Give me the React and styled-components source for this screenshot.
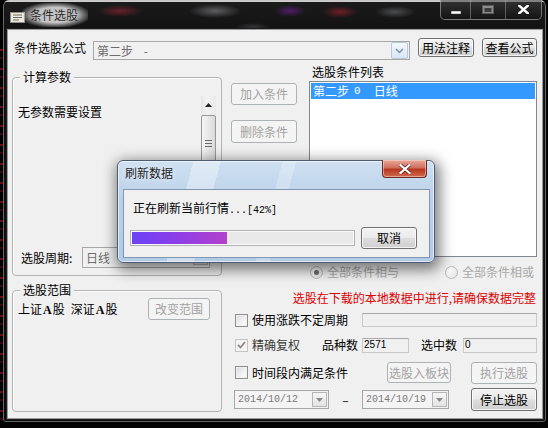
import styled, { createGlobalStyle } from "styled-components";

const GlobalStyle = createGlobalStyle`
  * { box-sizing: border-box; }
  html, body { margin: 0; padding: 0; background: #030303; }
  body {
    font-family: "Noto Sans CJK SC", "Liberation Sans", sans-serif;
    font-size: 12px;
    line-height: 16px;
    color: #000;
  }
`;

const Page = styled.div`
  position: relative;
  width: 548px;
  height: 428px;
  padding-left: 3px;
  overflow: hidden;
  background:
    repeating-linear-gradient(180deg, #000 0 9px, #6b1010 9px 11px, #000 11px 17px, #3a0808 17px 19px) 0 40px / 3px 380px no-repeat,
    #030303;
`;

const Window = styled.div`
  width: 543px;
  height: 422px;
  display: flex;
  flex-direction: column;
  border-radius: 6px 6px 3px 3px;
  box-shadow: inset 0 0 0 1px rgba(190, 190, 190, 0.5);
  background:
    radial-gradient(ellipse 22px 6px at 117px 11px, rgba(170, 40, 60, 0.55), transparent),
    radial-gradient(ellipse 26px 7px at 212px 11px, rgba(200, 200, 210, 0.4), transparent),
    radial-gradient(ellipse 16px 6px at 287px 11px, rgba(120, 30, 160, 0.6), transparent),
    radial-gradient(ellipse 18px 6px at 337px 12px, rgba(200, 40, 50, 0.5), transparent),
    radial-gradient(ellipse 20px 6px at 392px 12px, rgba(170, 175, 185, 0.35), transparent),
    radial-gradient(ellipse 18px 4px at 250px 27px, rgba(120, 120, 130, 0.35), transparent),
    linear-gradient(180deg, #cfcfcf 0 2px, #1b1b1b 2px, #121212 30px, #0b0b0b);
`;

const TitleBar = styled.div`
  display: flex;
  align-items: flex-start;
  height: 30px;
  flex: none;
`;

const AppIcon = styled.svg`
  margin: 12px 0 0 7px;
  flex: none;
`;

const WindowTitle = styled.div`
  margin: 3px 0 0 -3px;
  padding: 4px 10px 4px 8px;
  color: #2a2a2a;
  background: radial-gradient(ellipse at center, rgba(215, 215, 215, 0.9) 45%, rgba(215, 215, 215, 0) 78%);
`;

const CaptionGroup = styled.div`
  display: flex;
  height: 20px;
  margin: 0 4px 0 auto;
  border: 1px solid rgba(215, 215, 215, 0.45);
  border-top: 0;
  border-radius: 0 0 5px 5px;
  overflow: hidden;
  background: linear-gradient(rgba(70, 70, 70, 0.55), rgba(20, 20, 20, 0.6));
`;

const CaptionButton = styled.div`
  width: ${(p) => p.$w}px;
  display: flex;
  align-items: center;
  justify-content: center;
  & + & { border-left: 1px solid rgba(215, 215, 215, 0.35); }
`;

const Client = styled.div`
  margin-left: 5px;
  width: 534px;
  height: 388px;
  flex: none;
  background: #f0f0f0;
  box-shadow: 0 0 0 1px #9a9a9a, 0 0 0 2px #1c1c1c;
`;

const FormulaRow = styled.div`
  display: flex;
  align-items: flex-start;
  height: 30px;
  padding: 8px 0 0 6px;
`;

const Label = styled.span`
  flex: none;
  width: ${(p) => (p.$w ? `${p.$w}px` : "auto")};
  margin-top: ${(p) => p.$mt || 0}px;
  margin-left: ${(p) => p.$ml || 0}px;
  white-space: nowrap;
`;

const Combo = styled.div`
  flex: none;
  display: flex;
  align-items: center;
  width: ${(p) => p.$w}px;
  height: ${(p) => p.$h}px;
  margin-top: ${(p) => p.$mt || 0}px;
  margin-left: ${(p) => p.$ml || 0}px;
  padding: 0 1px 0 3px;
  border: 1px solid #a7a7a7;
  background: ${(p) => (p.$light ? "#f4f4f4" : "#f0f0f0")};
  color: #6d6d6d;
`;

const ComboText = styled.span`
  flex: 1;
  white-space: pre;
  font-family: ${(p) => (p.$mono ? '"Liberation Mono", monospace' : "inherit")};
  font-size: ${(p) => (p.$mono ? "10px" : "12px")};
  color: ${(p) => (p.$mono ? "#7a7a7a" : "#6d6d6d")};
`;

const ComboArrow = styled.span`
  flex: none;
  display: flex;
  align-items: center;
  justify-content: center;
  width: ${(p) => p.$size}px;
  height: ${(p) => p.$size}px;
  border: 1px solid ${(p) => (p.$blue ? "#b6c9dd" : "#b5b5b5")};
  border-radius: ${(p) => (p.$blue ? "2px" : "0")};
  background: ${(p) =>
    p.$blue ? "linear-gradient(#f3f8fd, #d9e7f5)" : "linear-gradient(#f7f7f7, #e3e3e3)"};
`;

const Btn = styled.button`
  flex: none;
  width: ${(p) => p.$w}px;
  height: ${(p) => p.$h || 22}px;
  margin: ${(p) => p.$m || "0"};
  padding: 0;
  font: inherit;
  line-height: 14px;
  color: #000;
  border: 1px solid #707070;
  border-radius: 3px;
  background: linear-gradient(#f2f2f2 0%, #ebebeb 48%, #dddddd 52%, #cfcfcf 100%);
  box-shadow: inset 0 0 0 1px rgba(255, 255, 255, 0.75);
  &:disabled {
    color: #a3a3a3;
    border-color: #adb2b5;
    background: #f4f4f4;
    box-shadow: none;
  }
`;

const Main = styled.div`
  display: grid;
  grid-template-columns: 210px 306px;
  column-gap: 9px;
  align-items: start;
  padding-left: 4px;
`;

const Column = styled.div`
  display: flex;
  flex-direction: column;
`;

const GroupBox = styled.div`
  display: flex;
  flex-direction: column;
  height: ${(p) => p.$h}px;
  margin-top: ${(p) => p.$mt}px;
  border: 1px solid #b3b3b3;
  border-radius: 4px;
  box-shadow: inset 1px 1px 0 #fff;
`;

const GroupTitle = styled.div`
  align-self: flex-start;
  margin: -9px 0 0 7px;
  padding: 0 3px;
  background: #f0f0f0;
`;

const ParamArea = styled.div`
  display: flex;
  height: 144px;
  margin-top: 11px;
  padding: 8px 5px 0 5px;
`;

const ParamText = styled.div`
  flex: 1;
`;

const ScrollBar = styled.div`
  flex: none;
  display: flex;
  flex-direction: column;
  align-items: center;
  width: 15px;
  margin-top: -8px;
  background: linear-gradient(90deg, #e6e6e6, #f2f2f2 40%, #eaeaea);
`;

const ScrollArrow = styled.div`
  height: 17px;
  display: flex;
  align-items: center;
  justify-content: center;
`;

const ScrollThumb = styled.div`
  width: 15px;
  height: 56px;
  margin-top: 2px;
  display: flex;
  align-items: center;
  justify-content: center;
  border: 1px solid #979797;
  border-radius: 2px;
  background: linear-gradient(90deg, #f4f4f4, #e8e8e8 50%, #dadada);
`;

const PeriodRow = styled.div`
  display: flex;
  align-items: center;
  height: 21px;
  margin-top: 7px;
  padding-left: 8px;
`;

const RangeRow = styled.div`
  display: flex;
  align-items: center;
  height: 22px;
  padding-left: 5px;
`;

const Market = styled.span`
  margin-left: ${(p) => p.$ml || 0}px;
  white-space: nowrap;
`;

const BoldA = styled.span`
  font-family: "Liberation Serif", serif;
  font-weight: bold;
  font-size: 12px;
  margin: 0 1px;
`;

const TopPart = styled.div`
  display: flex;
  height: 197px;
`;

const ButtonCol = styled.div`
  display: flex;
  flex-direction: column;
  gap: 15px;
  width: 66px;
  padding-top: 23px;
`;

const ListCol = styled.div`
  display: flex;
  flex-direction: column;
  width: 228px;
  margin-left: 12px;
`;

const ListTitle = styled.div`
  margin-top: 4px;
  padding-left: 3px;
`;

const ListBox = styled.div`
  height: 176px;
  margin-top: 1px;
  padding: 1px;
  border: 1px solid #828790;
  background: #fff;
`;

const ListRow = styled.div`
  display: flex;
  height: 16px;
  padding-left: 2px;
  color: ${(p) => (p.$selected ? "#fff" : "#000")};
  background: ${(p) => (p.$selected ? "#3399ff" : "transparent")};
`;

const Cell = styled.span`
  margin-left: ${(p) => p.$ml || 0}px;
  font-family: ${(p) => (p.$mono ? '"Liberation Mono", monospace' : "inherit")};
  font-size: ${(p) => (p.$mono ? "11px" : "12px")};
`;

const RadioRow = styled.div`
  display: flex;
  align-items: center;
  height: 16px;
  margin-top: 7px;
  padding-left: 79px;
  color: #a8a8a8;
`;

const RadioItem = styled.label`
  display: flex;
  align-items: center;
  gap: 4px;
  margin-left: ${(p) => p.$ml || 0}px;
`;

const RadioCircle = styled.span`
  width: 13px;
  height: 13px;
  display: flex;
  align-items: center;
  justify-content: center;
  border: 1px solid #b9b9b9;
  border-radius: 50%;
  background: radial-gradient(circle at 35% 35%, #fbfbfb, #e1e1e1);
  &::after {
    content: "";
    width: 5px;
    height: 5px;
    border-radius: 50%;
    background: ${(p) => (p.$on ? "#6e6e6e" : "transparent")};
  }
`;

const RedNote = styled.div`
  height: 16px;
  margin-top: 10px;
  padding-right: 1px;
  text-align: right;
  color: #dd0000;
  white-space: nowrap;
`;

const OptRow = styled.div`
  display: flex;
  align-items: center;
  height: ${(p) => p.$h || 16}px;
  margin-top: ${(p) => p.$mt}px;
  padding-left: ${(p) => p.$pl ?? 4}px;
`;

const CheckItem = styled.label`
  display: flex;
  align-items: center;
  gap: 4px;
  color: ${(p) => (p.$dim ? "#3a3a3a" : "#000")};
  white-space: nowrap;
`;

const CheckBox = styled.span`
  flex: none;
  width: 13px;
  height: 13px;
  display: flex;
  align-items: center;
  justify-content: center;
  border: 1px solid ${(p) => (p.$disabled ? "#c4c4c4" : "#8e8f8f")};
  background: ${(p) =>
    p.$disabled ? "#f4f4f4" : "linear-gradient(135deg, #d6d9de, #f7f7f7 70%)"};
  box-shadow: inset 0 0 0 1px ${(p) => (p.$disabled ? "#f4f4f4" : "#f0f0f0")};
`;

const Field = styled.div`
  flex: none;
  display: flex;
  align-items: center;
  width: ${(p) => p.$w}px;
  height: ${(p) => p.$h || 15}px;
  margin-left: ${(p) => (p.$auto ? "auto" : `${p.$ml || 0}px`)};
  padding-left: 1px;
  border: 1px solid #c9c9c9;
  border-top-color: #a9a9a9;
  background: #f0f0f0;
  font-family: "Liberation Sans", sans-serif;
  font-size: 10px;
`;

const Dash = styled.span`
  width: 33px;
  text-align: center;
  color: #000;
`;

const Dialog = styled.div`
  position: absolute;
  left: 117px;
  top: 160px;
  width: 318px;
  height: 103px;
  display: flex;
  flex-direction: column;
  border: 1px solid #4a5d74;
  border-radius: 6px;
  box-shadow: 2px 4px 14px 3px rgba(0, 0, 0, 0.5), inset 0 0 0 1px rgba(255, 255, 255, 0.6);
  background:
    linear-gradient(105deg, transparent 0 22%, rgba(255, 255, 255, 0.35) 22% 30%, transparent 30% 48%, rgba(255, 255, 255, 0.25) 48% 52%, transparent 52%),
    linear-gradient(#cfe0f2, #b9d0e9 40%, #b2cbe6);
`;

const DialogTitleBar = styled.div`
  display: flex;
  align-items: flex-start;
  height: 28px;
  padding-left: 7px;
`;

const DialogTitle = styled.div`
  margin-top: 4px;
  color: #1e1e1e;
  text-shadow: 0 0 6px rgba(255, 255, 255, 0.9);
`;

const DialogClose = styled.div`
  width: 45px;
  height: 18px;
  margin: -1px 7px 0 auto;
  display: flex;
  align-items: center;
  justify-content: center;
  border: 1px solid #6a2c24;
  border-top: 0;
  border-radius: 0 0 4px 4px;
  background: linear-gradient(#e9aa9c, #d0705c 45%, #b8381f 55%, #cf6a50);
  box-shadow: inset 0 0 0 1px rgba(255, 220, 210, 0.5);
`;

const DialogBody = styled.div`
  height: 69px;
  margin: 0 4px 0 5px;
  padding: 10px 6px 0 6px;
  border: 1px solid #8296ad;
  background: #f0f0f0;
`;

const DialogText = styled.div`
  margin-left: 3px;
`;

const Mono = styled.span`
  font-family: "Liberation Mono", monospace;
  font-size: 10px;
`;

const ProgressRow = styled.div`
  display: flex;
  align-items: center;
  height: 22px;
  margin-top: 8px;
`;

const Progress = styled.div`
  width: 225px;
  height: 16px;
  padding: 1px;
  border: 1px solid #b2b2b2;
  background: #e9e9e9;
  box-shadow: inset 0 0 0 1px #fafafa;
`;

const ProgressFill = styled.div`
  height: 100%;
  background: linear-gradient(90deg, #6c41f6, #8a3fe8 45%, #b43fcc);
`;

const percent = 43;

function DownTriangle() {
  return (
    <svg width="7" height="4" viewBox="0 0 7 4">
      <path d="M0 0h7L3.5 4Z" fill="#8a8a8a" />
    </svg>
  );
}

export default function App() {
  return (
    <Page>
      <GlobalStyle />
      <Window>
        <TitleBar>
          <AppIcon width="15" height="11" viewBox="0 0 15 11">
            <rect x="0.5" y="0.5" width="14" height="10" fill="#efe9d8" stroke="#8c8c8c" />
            <path d="M3 3h9M3 5.5h9M3 8h6" stroke="#6a6a6a" strokeWidth="1" />
          </AppIcon>
          <WindowTitle>条件选股</WindowTitle>
          <CaptionGroup>
            <CaptionButton $w={29}>
              <svg width="10" height="10" viewBox="0 0 10 10">
                <rect x="0" y="6" width="10" height="3" fill="#fff" stroke="#333" strokeWidth="0.5" />
              </svg>
            </CaptionButton>
            <CaptionButton $w={35}>
              <svg width="12" height="10" viewBox="0 0 12 10">
                <rect x="0.5" y="0.5" width="11" height="8" fill="#8d8d8d" stroke="#5a5a5a" />
                <rect x="2.5" y="3" width="7" height="4" fill="#3c3c3c" />
              </svg>
            </CaptionButton>
            <CaptionButton $w={36}>
              <svg width="11" height="9" viewBox="0 0 11 9">
                <path d="M1 0.5l9 8M10 0.5l-9 8" stroke="#fff" strokeWidth="2.4" strokeLinecap="square" />
              </svg>
            </CaptionButton>
          </CaptionGroup>
        </TitleBar>

        <Client>
          <FormulaRow>
            <Label $mt={2}>条件选股公式</Label>
            <Combo $w={317} $h={19} $mt={3} $ml={7}>
              <ComboText>第二步    -</ComboText>
              <ComboArrow $size={17} $blue>
                <svg width="9" height="6" viewBox="0 0 9 6">
                  <path d="M1 1l3.5 3.5L8 1" fill="none" stroke="#7b8ea5" strokeWidth="1.5" />
                </svg>
              </ComboArrow>
            </Combo>
            <Btn $w={56} $h={19} $m="0 0 0 8px">用法注释</Btn>
            <Btn $w={55} $h={19} $m="0 0 0 8px">查看公式</Btn>
          </FormulaRow>

          <Main>
            <Column>
              <GroupBox $h={199} $mt={17}>
                <GroupTitle>计算参数</GroupTitle>
                <ParamArea>
                  <ParamText>无参数需要设置</ParamText>
                  <ScrollBar>
                    <ScrollArrow>
                      <svg width="7" height="4" viewBox="0 0 7 4">
                        <path d="M0 4L3.5 0L7 4Z" fill="#222" />
                      </svg>
                    </ScrollArrow>
                    <ScrollThumb>
                      <svg width="7" height="7" viewBox="0 0 7 7">
                        <path d="M0 0.5h7M0 3.5h7M0 6.5h7" stroke="#6a6a6a" />
                      </svg>
                    </ScrollThumb>
                  </ScrollBar>
                </ParamArea>
                <PeriodRow>
                  <Label $w={61}>选股周期:</Label>
                  <Combo $w={128} $h={21}>
                    <ComboText>日线</ComboText>
                    <ComboArrow $size={15}>
                      <DownTriangle />
                    </ComboArrow>
                  </Combo>
                </PeriodRow>
              </GroupBox>

              <GroupBox $h={122} $mt={14}>
                <GroupTitle>选股范围</GroupTitle>
                <RangeRow>
                  <Market>
                    上证<BoldA>A</BoldA>股
                  </Market>
                  <Market $ml={6}>
                    深证<BoldA>A</BoldA>股
                  </Market>
                  <Btn $w={62} $h={22} $m="0 11px 0 auto" disabled>
                    改变范围
                  </Btn>
                </RangeRow>
              </GroupBox>
            </Column>

            <Column>
              <TopPart>
                <ButtonCol>
                  <Btn $w={66} $h={22} disabled>加入条件</Btn>
                  <Btn $w={66} $h={23} disabled>删除条件</Btn>
                </ButtonCol>
                <ListCol>
                  <ListTitle>选股条件列表</ListTitle>
                  <ListBox>
                    <ListRow $selected>
                      <Cell>第二步</Cell>
                      <Cell $ml={5} $mono>0</Cell>
                      <Cell $ml={13}>日线</Cell>
                    </ListRow>
                  </ListBox>
                </ListCol>
              </TopPart>

              <RadioRow>
                <RadioItem>
                  <RadioCircle $on />
                  全部条件相与
                </RadioItem>
                <RadioItem $ml={46}>
                  <RadioCircle />
                  全部条件相或
                </RadioItem>
              </RadioRow>

              <RedNote>选股在下载的本地数据中进行,请确保数据完整</RedNote>

              <OptRow $mt={6}>
                <CheckItem>
                  <CheckBox />
                  使用涨跌不定周期
                </CheckItem>
                <Field $w={175} $h={14} $auto />
              </OptRow>

              <OptRow $mt={9}>
                <CheckItem $dim>
                  <CheckBox $disabled>
                    <svg width="9" height="8" viewBox="0 0 9 8">
                      <path d="M1 4l2.5 2.5L8 1" fill="none" stroke="#8a8a8a" strokeWidth="1.8" />
                    </svg>
                  </CheckBox>
                  精确复权
                </CheckItem>
                <Label $ml={22}>品种数</Label>
                <Field $w={47} $ml={4}>2571</Field>
                <Label $ml={12}>选中数</Label>
                <Field $w={74} $ml={6}>0</Field>
              </OptRow>

              <OptRow $mt={9} $h={21}>
                <CheckItem>
                  <CheckBox />
                  时间段内满足条件
                </CheckItem>
                <Btn $w={64} $h={21} $m="0 0 0 auto" disabled>选股入板块</Btn>
                <Btn $w={66} $h={22} $m="0 0 0 20px" disabled>执行选股</Btn>
              </OptRow>

              <OptRow $mt={5} $h={23} $pl={3}>
                <Combo $w={95} $h={19} $light>
                  <ComboText $mono>2014/10/12</ComboText>
                  <ComboArrow $size={15}>
                    <DownTriangle />
                  </ComboArrow>
                </Combo>
                <Dash>–</Dash>
                <Combo $w={87} $h={19} $light>
                  <ComboText $mono>2014/10/19</ComboText>
                  <ComboArrow $size={15}>
                    <DownTriangle />
                  </ComboArrow>
                </Combo>
                <Btn $w={66} $h={23} $m="0 0 0 auto">停止选股</Btn>
              </OptRow>
            </Column>
          </Main>
        </Client>
      </Window>

      <Dialog>
        <DialogTitleBar>
          <DialogTitle>刷新数据</DialogTitle>
          <DialogClose>
            <svg width="12" height="10" viewBox="0 0 12 10">
              <path d="M1.5 1l9 8M10.5 1l-9 8" stroke="#5a1a12" strokeWidth="3.6" strokeLinecap="square" />
              <path d="M1.5 1l9 8M10.5 1l-9 8" stroke="#fff" strokeWidth="2.2" strokeLinecap="square" />
            </svg>
          </DialogClose>
        </DialogTitleBar>
        <DialogBody>
          <DialogText>
            正在刷新当前行情<Mono>...[42%]</Mono>
          </DialogText>
          <ProgressRow>
            <Progress>
              <ProgressFill style={{ width: `${percent}%` }} />
            </Progress>
            <Btn $w={56} $h={22} $m="0 0 0 6px">取消</Btn>
          </ProgressRow>
        </DialogBody>
      </Dialog>
    </Page>
  );
}
